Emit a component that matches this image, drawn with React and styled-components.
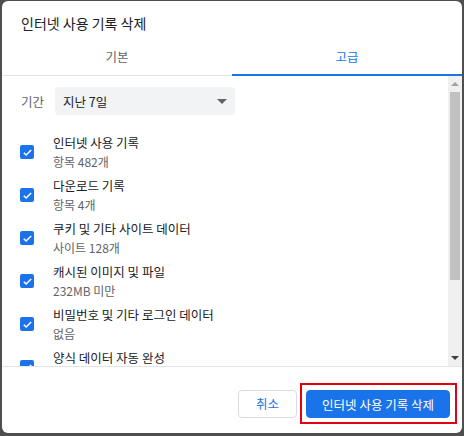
import styled, { createGlobalStyle } from 'styled-components';

const GlobalStyle = createGlobalStyle`
  html, body {
    margin: 0;
    padding: 0;
    background: #4f4f4f;
  }
  body {
    font-family: "Noto Sans CJK KR", "Noto Sans", "Liberation Sans", sans-serif;
  }
`;

const Dialog = styled.div`
  width: 460px;
  height: 432px;
  margin: 1px 2px 3px 2px;
  background: #fff;
  border-radius: 6px;
  display: flex;
  flex-direction: column;
  overflow: hidden;
`;

const Title = styled.div`
  padding: 12px 19px 8px;
  font-size: 14px;
  line-height: 20px;
  color: #202124;
`;

const TabBar = styled.div`
  display: flex;
  border-bottom: 1px solid #e4e4e4;
`;

const Tab = styled.div`
  flex: 1;
  height: 35px;
  margin-bottom: -1px;
  display: flex;
  align-items: center;
  justify-content: center;
  padding-bottom: 3px;
  box-sizing: border-box;
  font-size: 12.5px;
  color: ${(p) => (p.$active ? '#1a73e8' : '#5f6368')};
  border-bottom: 2px solid ${(p) => (p.$active ? '#1a73e8' : 'transparent')};
`;

const Body = styled.div`
  flex: 1;
  display: flex;
  min-height: 0;
  border-bottom: 1px solid #e4e4e4;
`;

const Content = styled.div`
  flex: 1;
  overflow: hidden;
  padding: 11px 0 0 19px;
`;

const PeriodRow = styled.div`
  display: flex;
  align-items: center;
  gap: 11px;
`;

const Label = styled.span`
  font-size: 12.5px;
  color: #5f6368;
`;

const Select = styled.div`
  width: 180px;
  height: 28px;
  box-sizing: border-box;
  background: #f1f3f4;
  border-radius: 4px;
  display: flex;
  align-items: center;
  justify-content: space-between;
  padding: 0 8px 0 8px;
  font-size: 12.5px;
  color: #202124;
`;

const Caret = styled.span`
  width: 0;
  height: 0;
  border-left: 5px solid transparent;
  border-right: 5px solid transparent;
  border-top: 5px solid #5f6368;
`;

const List = styled.div`
  display: flex;
  flex-direction: column;
  gap: 5px;
  padding-top: 18px;
`;

const Row = styled.div`
  display: flex;
  align-items: center;
  gap: 19px;
`;

const Check = styled.span`
  flex: none;
  width: 14px;
  height: 14px;
  margin-left: -1px;
  border-radius: 2px;
  background: #1a73e8;
  display: flex;
  align-items: center;
  justify-content: center;
`;

const ItemText = styled.div`
  display: flex;
  flex-direction: column;
  line-height: 19px;
`;

const ItemTitle = styled.span`
  font-size: 12.5px;
  color: #202124;
`;

const ItemSub = styled.span`
  font-size: 12px;
  color: #5f6368;
`;

const Scrollbar = styled.div`
  width: 14px;
  flex: none;
  background: #f0f0f0;
  display: flex;
  flex-direction: column;
  align-items: center;
`;

const ScrollButton = styled.div`
  height: 16px;
  width: 100%;
  display: flex;
  align-items: center;
  justify-content: center;
`;

const Arrow = styled.span`
  width: 0;
  height: 0;
  border-left: 4px solid transparent;
  border-right: 4px solid transparent;
  ${(p) =>
    p.$up
      ? 'border-bottom: 4px solid #a3a3a3;'
      : 'border-top: 4px solid #404040;'}
`;

const Thumb = styled.div`
  width: 10px;
  height: 188px;
  background: #c1c1c1;
`;

const Track = styled.div`
  flex: 1;
`;

const Footer = styled.div`
  height: 66px;
  box-sizing: border-box;
  display: flex;
  justify-content: flex-end;
  align-items: center;
  padding: 7px 5px 0 0;
  gap: 3px;
`;

const Button = styled.button`
  height: 28px;
  box-sizing: border-box;
  border-radius: 4px;
  font-family: inherit;
  font-size: 12.5px;
  padding: 0 ${(p) => (p.$primary ? '15px' : '17px')};
  cursor: pointer;
  border: 1px solid ${(p) => (p.$primary ? '#1a73e8' : '#dadce0')};
  background: ${(p) => (p.$primary ? '#1a73e8' : '#fff')};
  color: ${(p) => (p.$primary ? '#fff' : '#1a73e8')};
`;

const Highlight = styled.div`
  border: 2px solid #e3000f;
  padding: 5px 5px 4px 4px;
  display: flex;
`;

const CheckMark = () => (
  <svg width="11" height="11" viewBox="0 0 24 24">
    <path d="M4 12.5l5 5L20 6.5" fill="none" stroke="#fff" strokeWidth="3.4" />
  </svg>
);

const items = [
  ['인터넷 사용 기록', '항목 482개'],
  ['다운로드 기록', '항목 4개'],
  ['쿠키 및 기타 사이트 데이터', '사이트 128개'],
  ['캐시된 이미지 및 파일', '232MB 미만'],
  ['비밀번호 및 기타 로그인 데이터', '없음'],
  ['양식 데이터 자동 완성', ''],
];

const App = () => {
  return (
    <>
      <GlobalStyle />
      <Dialog>
        <Title>인터넷 사용 기록 삭제</Title>
        <TabBar>
          <Tab>기본</Tab>
          <Tab $active>고급</Tab>
        </TabBar>
        <Body>
          <Content>
            <PeriodRow>
              <Label>기간</Label>
              <Select>
                지난 7일
                <Caret />
              </Select>
            </PeriodRow>
            <List>
              {items.map(([title, sub]) => (
                <Row key={title}>
                  <Check>
                    <CheckMark />
                  </Check>
                  <ItemText>
                    <ItemTitle>{title}</ItemTitle>
                    <ItemSub>{sub || '\u00a0'}</ItemSub>
                  </ItemText>
                </Row>
              ))}
            </List>
          </Content>
          <Scrollbar>
            <ScrollButton>
              <Arrow $up />
            </ScrollButton>
            <Thumb />
            <Track />
            <ScrollButton>
              <Arrow />
            </ScrollButton>
          </Scrollbar>
        </Body>
        <Footer>
          <Button>취소</Button>
          <Highlight>
            <Button $primary>인터넷 사용 기록 삭제</Button>
          </Highlight>
        </Footer>
      </Dialog>
    </>
  );
};

export default App;
